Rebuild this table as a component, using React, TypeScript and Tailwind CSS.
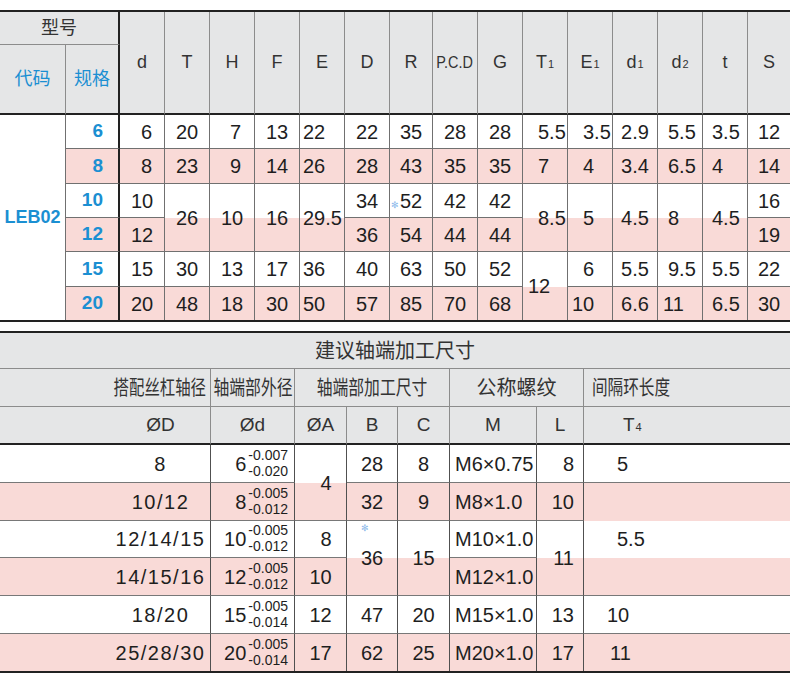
import React from "react";
import clsx from "clsx";

type Spec = { v: React.ReactNode; rs?: number; cs?: number; cls?: string };
type Placed = Spec & { r: number; c: number; lastCol: boolean; lastRow: boolean };

// walk the rows the way grid auto-placement does, so each cell knows its column / last row
function place(rows: Spec[][], ncols: number): Placed[] {
  const busy: Record<string, boolean> = {};
  const out: Placed[] = [];
  rows.forEach((row, r) => {
    let c = 0;
    row.forEach((s) => {
      while (busy[`${r},${c}`]) c++;
      const rs = s.rs ?? 1;
      const cs = s.cs ?? 1;
      for (let i = 0; i < rs; i++) for (let j = 0; j < cs; j++) busy[`${r + i},${c + j}`] = true;
      out.push({ ...s, r, c, lastCol: c + cs === ncols, lastRow: r + rs === rows.length });
      c += cs;
    });
  });
  return out;
}

const ROWSPAN: Record<number, string> = { 1: "", 2: "row-span-2", 3: "row-span-3", 6: "row-span-6" };

const PINK = "bg-[#f9dad7]";
const BLUE = "text-[#1b8fd2]";

const R12 = "justify-end pr-[12px]";
const R13 = "justify-end pr-[13px]";
const L3 = "justify-start pl-[3px]";
const L4 = "justify-start pl-[4px]";
const L5 = "justify-start pl-[5px]";
const L9 = "justify-start pl-[9px]";
const L10 = "justify-start pl-[10px]";
const L15 = "justify-start pl-[15px]";

const n = (v: React.ReactNode, cls?: string, rs?: number): Spec => ({ v, cls, rs });

/* ---------- top table: LEB02 ---------- */

function Sub({ a, b }: { a: string; b: string }) {
  return (
    <span className="flex items-baseline">
      {a}
      <span className="ml-px text-[11px]">{b}</span>
    </span>
  );
}

const LETTERS: React.ReactNode[] = [
  "d", "T", "H", "F", "E", "D", "R",
  <span className="inline-block scale-x-[0.85] whitespace-nowrap text-[17px]">P.C.D</span>,
  "G",
  <Sub a="T" b="1" />, <Sub a="E" b="1" />, <Sub a="d" b="1" />, <Sub a="d" b="2" />,
  "t", "S",
];

const TOP: Spec[][] = [
  [n("LEB02", "", 6), n("6"), n("6", R12), n("20"), n("7", R13), n("13"), n("22", L3), n("22"), n("35"), n("28"), n("28"), n("5.5", L15), n("3.5", L15), n("2.9"), n("5.5", L10), n("3.5", L9), n("12")],
  [n("8"), n("8", R12), n("23"), n("9", R13), n("14"), n("26", L3), n("28"), n("43"), n("35"), n("35"), n("7", L15), n("4", L15), n("3.4"), n("6.5", L10), n("4", L9), n("14")],
  [n("10"), n("10"), n("26", "", 2), n("10", "", 2), n("16", "", 2), n("29.5", L3, 2), n("34"), n("52"), n("42"), n("42"), n("8.5", L15, 2), n("5", L15, 2), n("4.5", "", 2), n("8", L10, 2), n("4.5", L9, 2), n("16")],
  [n("12"), n("12"), n("36"), n("54"), n("44"), n("44"), n("19")],
  [n("15"), n("15"), n("30"), n("13"), n("17"), n("36", L3), n("40"), n("63"), n("50"), n("52"), n("12", L5, 2), n("6", L15), n("5.5"), n("9.5", L10), n("5.5", L9), n("22")],
  [n("20"), n("20"), n("48"), n("18"), n("30"), n("50", L3), n("57"), n("85"), n("70"), n("68"), n("10", L4), n("6.6"), n("11", L5), n("6.5", L9), n("30")],
];

const TOP_COLS = "grid-cols-[66px_54px_45px_45px_45px_45px_45px_45px_43px_45px_45px_45px_45px_45px_45px_45px_42px]";
const TOP_ROWS = [34, 35, 34, 34, 35, 33];

function TopTable() {
  const cells = place(TOP, 17);
  return (
    <div className="border-t-2 border-b-2 border-[#222]">
      <div className={clsx("grid grid-rows-[33px_70px] bg-[#e5e6e7] text-[18px] text-[#333]", TOP_COLS)}>
        <div className="col-span-2 flex items-center justify-center border-r-2 border-b border-r-[#222] border-b-[#8c8c8c]">型号</div>
        {LETTERS.map((l, i) => (
          <div key={i} className={clsx("row-span-2 flex items-center justify-center border-b-2 border-b-[#222] border-r-[#8c8c8c]", i < 14 && "border-r")}>
            {l}
          </div>
        ))}
        <div className={clsx("flex items-center justify-center border-r border-b-2 border-r-[#8c8c8c] border-b-[#222]", BLUE)}>代码</div>
        <div className={clsx("flex items-center justify-center border-r-2 border-b-2 border-[#222]", BLUE)}>规格</div>
      </div>

      <div className="grid">
        <div className="col-start-1 row-start-1 grid grid-rows-[34px_35px_34px_34px_35px_33px] pl-[66px]">
          {TOP_ROWS.map((h, i) => (
            <div key={h + "-" + i} className={i % 2 ? PINK : ""} />
          ))}
        </div>
        <div className={clsx("col-start-1 row-start-1 grid grid-rows-[34px_35px_34px_34px_35px_33px]", TOP_COLS)}>
          {cells.map((p) => (
            <div
              key={`${p.r}-${p.c}`}
              className={clsx(
                "flex items-center border-[#707070]",
                ROWSPAN[p.rs ?? 1],
                !p.lastRow && "border-b",
                p.c === 0 && "justify-center border-r text-[18px] font-bold",
                p.c === 1 && "justify-end border-r-2 border-r-[#222] pr-[15px] text-[19px] font-bold",
                p.c <= 1 && BLUE,
                p.c > 1 && !p.lastCol && "border-r",
                p.c > 1 && "text-[20px]",
                p.c > 1 && (p.cls || "justify-center"),
              )}
            >
              {p.v}
            </div>
          ))}
        </div>
      </div>
    </div>
  );
}

/* ---------- bottom table: 建议轴端加工尺寸 ---------- */

function Tol({ v, hi, lo }: { v: string; hi: string; lo: string }) {
  return (
    <span className="flex items-center">
      <span>{v}</span>
      <span className="ml-[2px] flex flex-col text-[14px] leading-[15.7px]">
        <span>{hi}</span>
        <span>{lo}</span>
      </span>
    </span>
  );
}

function Slashed({ v }: { v: string }) {
  return <span className="tracking-[1.5px]">{v}</span>;
}

const COL_ALIGN = [
  "justify-center pl-[111px]",
  "justify-end pr-[6px]",
  "justify-center",
  "justify-center",
  "justify-center",
  "justify-start pl-[5px]",
  "justify-end pr-[9px]",
  "justify-start",
];

const BOTTOM: Spec[][] = [
  [n(<Slashed v="8" />), n(<Tol v="6" hi="-0.007" lo="-0.020" />), n("4", "pl-[11px]", 2), n("28"), n("8"), n("M6×0.75"), n("8"), n("5", "pl-[33px]")],
  [n(<Slashed v="10/12" />), n(<Tol v="8" hi="-0.005" lo="-0.012" />), n("32"), n("9"), n("M8×1.0"), n("10"), n("5.5", "pl-[33px]", 3)],
  [n(<Slashed v="12/14/15" />), n(<Tol v="10" hi="-0.005" lo="-0.012" />), n("8", "pl-[11px]"), n("36", "", 2), n("15", "", 2), n("M10×1.0"), n("11", "", 2)],
  [n(<Slashed v="14/15/16" />), n(<Tol v="12" hi="-0.005" lo="-0.012" />), n("10"), n("M12×1.0")],
  [n(<Slashed v="18/20" />), n(<Tol v="15" hi="-0.005" lo="-0.014" />), n("12"), n("47"), n("20"), n("M15×1.0"), n("13"), n("10", "pl-[23px]")],
  [n(<Slashed v="25/28/30" />), n(<Tol v="20" hi="-0.005" lo="-0.014" />), n("17"), n("62"), n("25"), n("M20×1.0"), n("17"), n("11", "pl-[26px]")],
];

const BOT_COLS = "grid-cols-[211px_84px_52px_51px_52px_87px_47px_206px]";
const BOT_ROWS = [38, 38, 37, 38, 38, 37];

function Squeeze({ children, cls }: { children: React.ReactNode; cls: string }) {
  return <span className={clsx("inline-block shrink-0 whitespace-nowrap", cls)}>{children}</span>;
}

function BottomTable() {
  const cells = place(BOTTOM, 8);
  const head = "flex items-center border-[#8c8c8c]";
  return (
    <div className="mt-[9px] border-t-2 border-b-2 border-[#222]">
      <div className="bg-[#e5e6e7] text-[#333]">
        <div className="flex h-[36px] items-center justify-center border-b border-[#8c8c8c] text-[20px]">建议轴端加工尺寸</div>
        <div className={clsx("grid grid-rows-[38px_38px] text-[20px]", BOT_COLS)}>
          <div className={clsx(head, "justify-end border-r border-b pr-[4px]")}>
            <Squeeze cls="origin-right scale-x-[0.77]">搭配丝杠轴径</Squeeze>
          </div>
          <div className={clsx(head, "justify-center border-r border-b")}>
            <Squeeze cls="scale-x-[0.79]">轴端部外径</Squeeze>
          </div>
          <div className={clsx(head, "col-span-3 justify-center border-r border-b")}>
            <Squeeze cls="scale-x-[0.79]">轴端部加工尺寸</Squeeze>
          </div>
          <div className={clsx(head, "col-span-2 justify-center border-r border-b")}>公称螺纹</div>
          <div className={clsx(head, "justify-start border-b pl-[8px]")}>
            <Squeeze cls="origin-left scale-x-[0.78]">间隔环长度</Squeeze>
          </div>

          {["ØD", "Ød", "ØA", "B", "C", "M", "L"].map((h, i) => (
            <div key={h} className={clsx(head, "border-r border-b-2 border-b-[#222] text-[19px]", i === 0 ? "justify-center pl-[111px]" : "justify-center")}>
              {h}
            </div>
          ))}
          <div className={clsx(head, "justify-start border-b-2 border-b-[#222] pl-[39px] text-[19px]")}>
            <Sub a="T" b="4" />
          </div>
        </div>
      </div>

      <div className="grid">
        <div className="col-start-1 row-start-1 grid grid-rows-[38px_38px_37px_38px_38px_37px]">
          {BOT_ROWS.map((h, i) => (
            <div key={h + "-" + i} className={i % 2 ? PINK : ""} />
          ))}
        </div>
        <div className={clsx("col-start-1 row-start-1 grid grid-rows-[38px_38px_37px_38px_38px_37px] text-[20px]", BOT_COLS)}>
          {cells.map((p) => (
            <div
              key={`${p.r}-${p.c}`}
              className={clsx(
                "flex items-center border-[#505050] border-b-[#787878]",
                ROWSPAN[p.rs ?? 1],
                !p.lastRow && "border-b",
                !p.lastCol && "border-r",
                COL_ALIGN[p.c],
                p.cls,
              )}
            >
              {p.v}
            </div>
          ))}
        </div>
      </div>
    </div>
  );
}

export default function App() {
  return (
    <div className="relative h-[680px] w-[790px] overflow-hidden bg-white pt-[10px] font-['Liberation_Sans','Noto_Sans_CJK_SC',sans-serif] text-[#1e1e1e]">
      <TopTable />
      <BottomTable />
      {/* faint blue watermark specks on the scan */}
      <span className="absolute left-[391px] top-[201px] text-[9px] leading-none text-[#8ab8ea]">✻</span>
      <span className="absolute left-[361px] top-[524px] text-[9px] leading-none text-[#8ab8ea]">✻</span>
    </div>
  );
}
